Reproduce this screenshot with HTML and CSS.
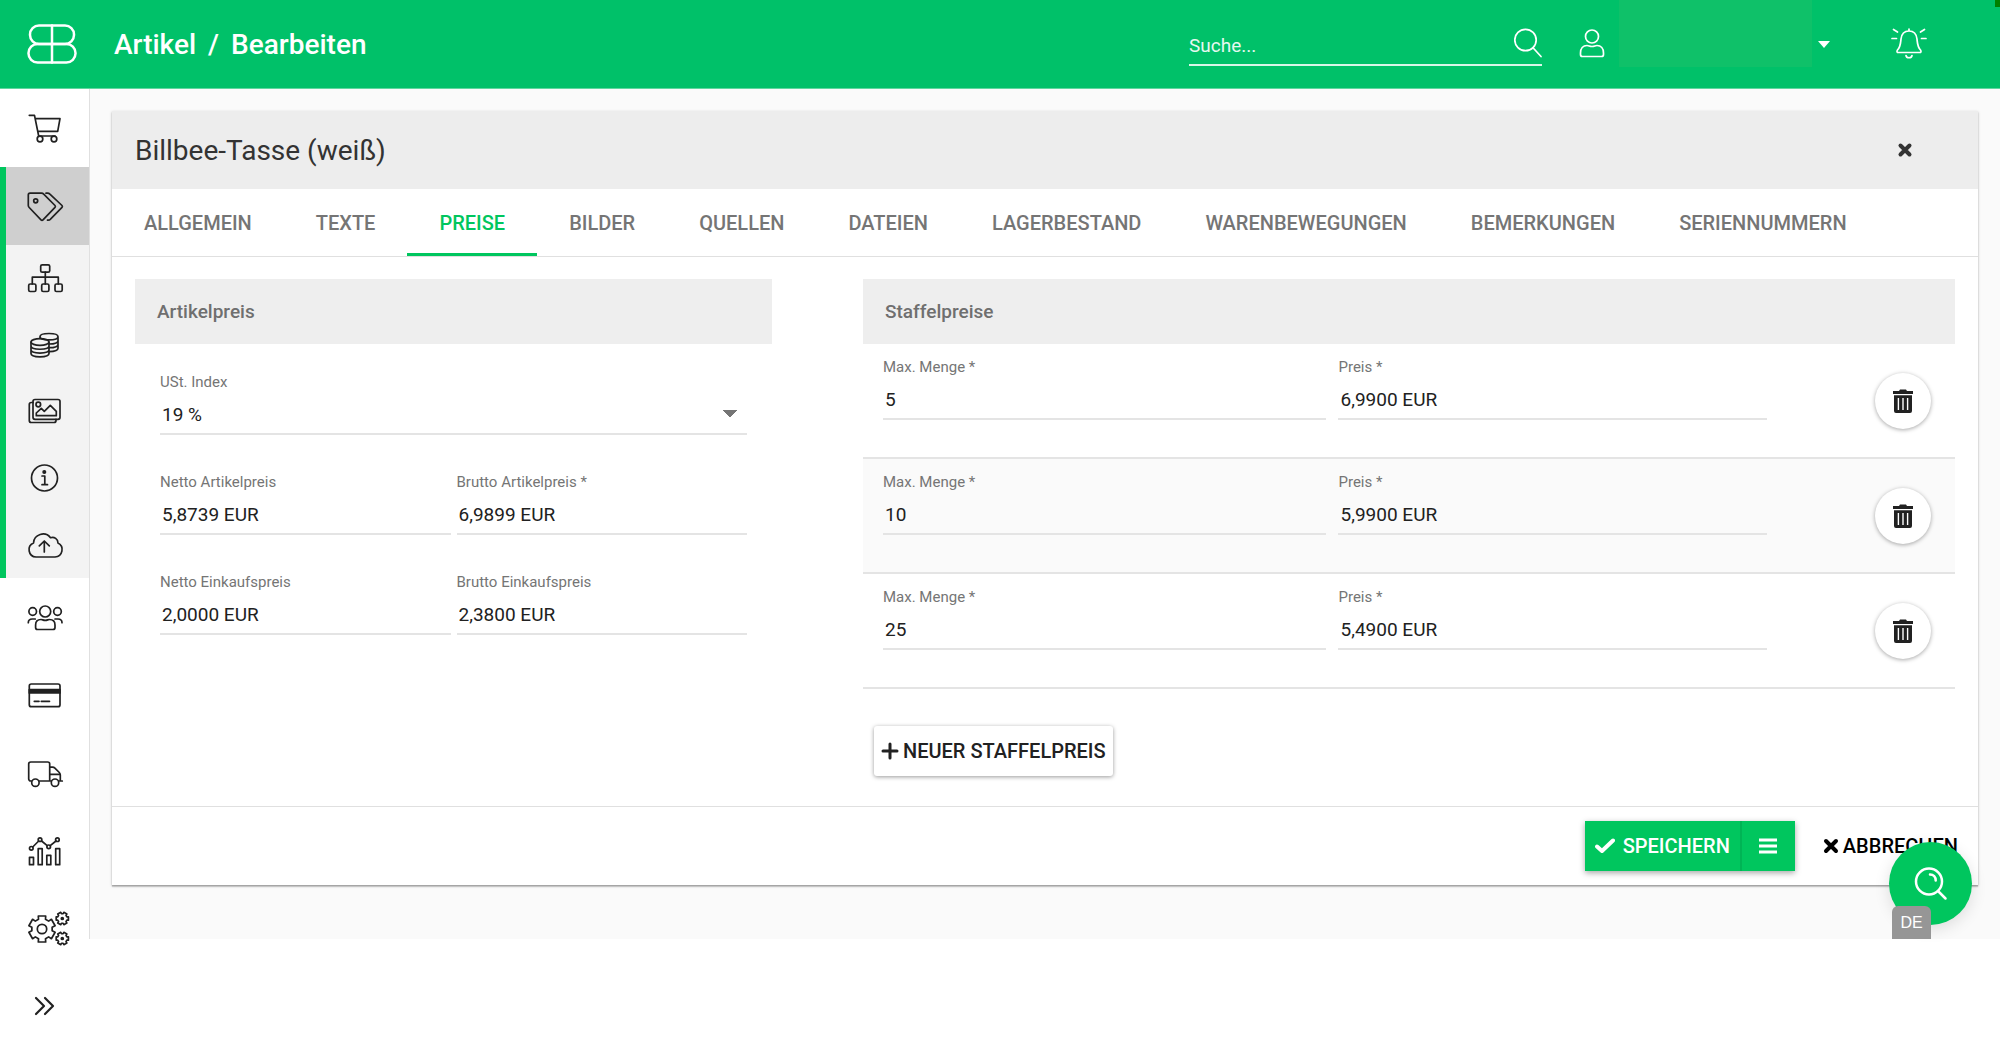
FILE: index.html
```
<!DOCTYPE html>
<html lang="de">

<head>
  <meta charset="UTF-8">
  <meta name="viewport" content="width=device-width, initial-scale=1.0">
  <title>Artikel / Bearbeiten</title>
  <link rel="stylesheet" href="styles.css">
</head>

<body>
  <!-- header -->
  <header class="header">
    <a href="#" class="header-logo" aria-label="Startseite">
      <svg width="50" height="42" viewBox="0 0 50 42">
        <rect x="3" y="2.5" width="44" height="18.5" rx="9" />
        <rect x="1.5" y="21" width="47" height="18.5" rx="9" />
        <path d="M25 2.5v37" />
      </svg>
    </a>
    <h1 class="header-ttl"><span>Artikel</span><span>/</span><span>Bearbeiten</span></h1>
    <form class="search">
      <input type="text" class="search-input" placeholder="Suche..." aria-label="Suche">
      <button type="button" class="icon-btn" aria-label="Suchen">
        <svg width="28" height="30" viewBox="0 0 28 30">
          <circle cx="11.5" cy="12" r="10.7" />
          <path d="M19 19.7l8 8.8" />
        </svg>
      </button>
    </form>
    <button type="button" class="user" aria-label="Benutzer">
      <svg width="26" height="30" viewBox="0 0 26 30">
        <circle cx="13" cy="7.500" r="6.5" />
        <path d="M8 16.500c2 0 2.500 1 5 1s3-1 5-1c4 0 6.500 3.200 6.500 7.500v1.500a2 2 0 0 1-2 2h-19a2 2 0 0 1-2-2V24c0-4.300 2.500-7.500 6.500-7.500z" />
      </svg>
      <span class="user-name"></span>
      <span class="user-caret"></span>
    </button>
    <button type="button" class="icon-btn bell" aria-label="Benachrichtigungen">
      <svg width="36" height="32" viewBox="0 0 36 32">
        <path d="M18 3v-2M18 3c-5 0-7.500 3.500-8 8-.5 5-.5 8-3.500 11-1 1.500-.5 2.500 1 2.500h21c1.500 0 2-1 1-2.500-3-3-3-6-3.500-11-.5-4.500-3-8-8-8zM15 27.500c.5 3 5.500 3 6 0M1 10.500h4.500M30.500 10.500H35M2.500 1.500l4 2.500M33.500 1.500l-4 2.500" />
      </svg>
    </button>
    <span class="header-mark"></span>
  </header>

  <div class="layout">
    <!-- sidebar -->
    <nav class="sidebar">
      <a href="#" class="sidebar-item" aria-label="Bestellungen">
        <svg width="44" height="36" viewBox="0 0 44 36">
          <path d="M2.300 5.300h5.200L11.700 26H28M8.200 8.700H33l-2.300 12.600H10.700" />
          <circle cx="13" cy="29" r="2.800" />
          <circle cx="27" cy="29" r="2.800" />
        </svg>
      </a>
      <div class="sidebar-group">
        <a href="#" class="sidebar-item is-active" aria-label="Artikel">
          <svg width="44" height="36" viewBox="0 0 44 36">
            <path d="M3 5.200h11.500c1 0 1.500.2 2.200.9L28 17.500c.5.600.5 1.300 0 1.900L16 31.800c-.7.700-1.300.7-2 0L2.200 19.500c-.6-.6-.9-1.100-.9-2V7c0-1.200.6-1.800 1.700-1.800z" />
            <circle cx="8.700" cy="12.800" r="2" />
            <path d="M19 5.200h1.500c1 0 1.700.3 2.400 1L35 17.500c.5.600.5 1.300 0 1.900L23.500 31.200c-.6.700-1.600 1-3 .9" />
          </svg>
        </a>
        <div class="sidebar-sub">
          <a href="#" class="sidebar-item" aria-label="Kategorien">
            <svg width="44" height="36" viewBox="0 0 44 36">
              <rect x="13.700" y="4.800" width="9" height="7.400" rx="1.500" />
              <rect x="1.700" y="24" width="7.200" height="7.500" rx="1.500" />
              <rect x="14.700" y="24" width="7.200" height="7.500" rx="1.500" />
              <rect x="28" y="24" width="7.200" height="7.500" rx="1.500" />
              <path d="M18.300 12.200V24M5.300 24v-6.800h26V24" />
            </svg>
          </a>
          <a href="#" class="sidebar-item" aria-label="Preise">
            <svg width="44" height="36" viewBox="0 0 44 36">
              <ellipse cx="13" cy="15" rx="9" ry="3.300" />
              <path d="M4 15v11.500c0 4.400 18 4.400 18 0V15M4 19c0 4.300 18 4.300 18 0M4 22.800c0 4.300 18 4.300 18 0" />
              <path d="M13 11.500V9.700c0-4.300 18-4.300 18 0v11.600c0 2-4 3.300-9 3.300M13 9.700c0 4.300 18 4.300 18 0M22 17c5 0 9-1.300 9-3.300M22 20.700c5 0 9-1.300 9-3.300" />
            </svg>
          </a>
          <a href="#" class="sidebar-item" aria-label="Bilder">
            <svg width="44" height="36" viewBox="0 0 44 36">
              <rect x="6" y="6.500" width="27" height="19.800" rx="2" />
              <path d="M6 9.500H4.300a2 2 0 0 0-2 2v16a2 2 0 0 0 2 2H27a2 2 0 0 0 2-2v-1.200" />
              <circle cx="11.300" cy="11.500" r="2.300" />
              <path d="M9.300 22.700V20l5-4.700 3 3 6-6 6 6v4.400z" />
            </svg>
          </a>
          <a href="#" class="sidebar-item" aria-label="Info">
            <svg width="44" height="36" viewBox="0 0 44 36">
              <circle cx="17.500" cy="18" r="13" />
              <circle cx="17.300" cy="12" r="1.200" class="fill" />
              <path d="M15 16h2.800v8.500M15 24.700h5.500" />
            </svg>
          </a>
          <a href="#" class="sidebar-item" aria-label="Upload">
            <svg width="44" height="36" viewBox="0 0 44 36">
              <path d="M9 30h19a7.400 7.400 0 0 0 3-14 5.500 5.500 0 0 0-7.500-5.300A9.500 9.500 0 0 0 6.500 16 7.300 7.300 0 0 0 9 30zM17.300 25V14M12.300 18.800l5-4.800 5 4.800" />
            </svg>
          </a>
        </div>
      </div>
      <a href="#" class="sidebar-item" aria-label="Kunden">
        <svg width="44" height="36" viewBox="0 0 44 36">
          <circle cx="18.200" cy="12.500" r="5.500" />
          <circle cx="5.700" cy="12.500" r="3.800" />
          <circle cx="30.500" cy="12.500" r="3.800" />
          <path d="M14 20.500c1.500 0 2 .8 4.200.8s2.700-.8 4.200-.8c3.600 0 5.600 2.200 5.600 5.500V28.500a2 2 0 0 1-2 2H10.600a2 2 0 0 1-2-2V26c0-3.300 2-5.500 5.400-5.500zM1.300 23.700c0-2.500 1.500-3.700 4-3.700h3M35 23.700c0-2.500-1.500-3.700-4-3.700h-3" />
        </svg>
      </a>
      <a href="#" class="sidebar-item" aria-label="Zahlungen">
        <svg width="44" height="36" viewBox="0 0 44 36">
          <rect x="2.300" y="7" width="30.700" height="22.700" rx="2" />
          <path class="fill" d="M2.300 12.500H33v3.500H2.300z" />
          <path d="M7.300 24.300H12M14.300 24.300h8.200" />
        </svg>
      </a>
      <a href="#" class="sidebar-item" aria-label="Versand">
        <svg width="44" height="36" viewBox="0 0 44 36">
          <path d="M4.500 26H3.700a2 2 0 0 1-2-2V9a2 2 0 0 1 2-2h17a2 2 0 0 1 2 2v17M12.300 26h12M31.800 26h3.500M22.700 12.200h2.800c1 0 1.700.3 2.400 1l4.400 4.300c.7.700 1 1.400 1 2.400V26M23 19.300h10" />
          <circle cx="8.400" cy="27.700" r="3.700" />
          <circle cx="28" cy="27.700" r="3.700" />
        </svg>
      </a>
      <a href="#" class="sidebar-item" aria-label="Auswertungen">
        <svg width="44" height="36" viewBox="0 0 44 36">
          <path d="M2.500 24.300h4v7.400h-4zM11.200 15.700h4v16h-4zM19.800 22.300h4v9.400h-4zM28.700 15.700h4v16h-4zM5.700 14l6-6M14.600 8l5.600 4.700M23.200 12.700L29 8" />
          <circle cx="4.300" cy="15.300" r="1.800" />
          <circle cx="13" cy="6.700" r="1.800" />
          <circle cx="21.700" cy="13.800" r="1.800" />
          <circle cx="30.400" cy="6.700" r="1.800" />
        </svg>
      </a>
      <a href="#" class="sidebar-item" aria-label="Einstellungen">
        <svg width="44" height="36" viewBox="0 0 44 36">
          <defs>
            <path id="gear" vector-effect="non-scaling-stroke" d="M-3.500-9.700L-3.700-13H3.700L3.500-9.700 6.650-7.880 9.410-9.700 13.110-3.300 10.150-1.820V1.820L13.110 3.300 9.410 9.700 6.650 7.880 3.500 9.700 3.700 13H-3.700L-3.500 9.700-6.650 7.880-9.410 9.700-13.110 3.300-10.150 1.820V-1.820L-13.110-3.300-9.410-9.700-6.650-7.880z" />
          </defs>
          <use href="#gear" transform="translate(15 18)" />
          <circle cx="15" cy="18" r="4.700" />
          <use href="#gear" transform="translate(35.300 7.500) rotate(30) scale(.47)" />
          <circle cx="35.300" cy="7.500" r="1" class="fill" />
          <use href="#gear" transform="translate(35.300 27.500) rotate(30) scale(.47)" />
          <circle cx="35.300" cy="27.500" r="1" class="fill" />
        </svg>
      </a>
      <a href="#" class="sidebar-item" aria-label="Menü ausklappen">
        <svg width="44" height="36" viewBox="0 0 44 36">
          <path class="bold" d="M9 10l8 8-8 8M18 10l8 8-8 8" />
        </svg>
      </a>
    </nav>
    <!-- sidebar -->

    <main class="main">
      <section class="card">
        <div class="card-header">
          <h2 class="card-ttl">Billbee-Tasse (weiß)</h2>
          <button type="button" class="icon-btn" aria-label="Schließen">
            <svg width="16" height="16" viewBox="0 0 16 16"><path d="M3.500 3.500l9 9M12.500 3.500l-9 9" /></svg>
          </button>
        </div>

        <div class="tabs" role="tablist">
          <button type="button" class="tab" role="tab">ALLGEMEIN</button>
          <button type="button" class="tab" role="tab">TEXTE</button>
          <button type="button" class="tab is-active" role="tab" aria-selected="true">PREISE</button>
          <button type="button" class="tab" role="tab">BILDER</button>
          <button type="button" class="tab" role="tab">QUELLEN</button>
          <button type="button" class="tab" role="tab">DATEIEN</button>
          <button type="button" class="tab" role="tab">LAGERBESTAND</button>
          <button type="button" class="tab" role="tab">WARENBEWEGUNGEN</button>
          <button type="button" class="tab" role="tab">BEMERKUNGEN</button>
          <button type="button" class="tab" role="tab">SERIENNUMMERN</button>
        </div>

        <div class="card-body">
          <!-- Artikelpreis -->
          <div class="panel">
            <h3 class="panel-ttl">Artikelpreis</h3>
            <div class="price-form">
              <div class="field field-wide">
                <label for="vat">USt. Index</label>
                <select id="vat">
                  <option>19 %</option>
                </select>
              </div>
              <div class="field">
                <label for="net-price">Netto Artikelpreis</label>
                <input type="text" id="net-price" value="5,8739 EUR">
              </div>
              <div class="field">
                <label for="gross-price">Brutto Artikelpreis *</label>
                <input type="text" id="gross-price" value="6,9899 EUR">
              </div>
              <div class="field">
                <label for="net-cost">Netto Einkaufspreis</label>
                <input type="text" id="net-cost" value="2,0000 EUR">
              </div>
              <div class="field">
                <label for="gross-cost">Brutto Einkaufspreis</label>
                <input type="text" id="gross-cost" value="2,3800 EUR">
              </div>
            </div>
          </div>

          <!-- Staffelpreise -->
          <div class="panel">
            <h3 class="panel-ttl">Staffelpreise</h3>
            <div class="tier">
              <div class="field">
                <label for="qty-1">Max. Menge *</label>
                <input type="text" id="qty-1" value="5">
              </div>
              <div class="field">
                <label for="price-1">Preis *</label>
                <input type="text" id="price-1" value="6,9900 EUR">
              </div>
              <button type="button" class="btn-delete" aria-label="Löschen">
                <svg width="22" height="24" viewBox="0 0 22 24"><path fill-rule="evenodd" d="M1 2h6l1-1.500h6L15 2h6v3H1zM2 6.300h18V22a2 2 0 0 1-2 2H4a2 2 0 0 1-2-2zM5.700 9v12h1.400V9zM10.300 9v12h1.400V9zM14.900 9v12h1.400V9z" /></svg>
              </button>
            </div>
            <div class="tier">
              <div class="field">
                <label for="qty-2">Max. Menge *</label>
                <input type="text" id="qty-2" value="10">
              </div>
              <div class="field">
                <label for="price-2">Preis *</label>
                <input type="text" id="price-2" value="5,9900 EUR">
              </div>
              <button type="button" class="btn-delete" aria-label="Löschen">
                <svg width="22" height="24" viewBox="0 0 22 24"><path fill-rule="evenodd" d="M1 2h6l1-1.500h6L15 2h6v3H1zM2 6.300h18V22a2 2 0 0 1-2 2H4a2 2 0 0 1-2-2zM5.700 9v12h1.400V9zM10.300 9v12h1.400V9zM14.900 9v12h1.400V9z" /></svg>
              </button>
            </div>
            <div class="tier">
              <div class="field">
                <label for="qty-3">Max. Menge *</label>
                <input type="text" id="qty-3" value="25">
              </div>
              <div class="field">
                <label for="price-3">Preis *</label>
                <input type="text" id="price-3" value="5,4900 EUR">
              </div>
              <button type="button" class="btn-delete" aria-label="Löschen">
                <svg width="22" height="24" viewBox="0 0 22 24"><path fill-rule="evenodd" d="M1 2h6l1-1.500h6L15 2h6v3H1zM2 6.300h18V22a2 2 0 0 1-2 2H4a2 2 0 0 1-2-2zM5.700 9v12h1.400V9zM10.300 9v12h1.400V9zM14.900 9v12h1.400V9z" /></svg>
              </button>
            </div>
            <button type="button" class="btn btn-add">
              <svg width="18" height="18" viewBox="0 0 18 18"><path d="M9 2v14M2 9h14" /></svg>
              NEUER STAFFELPREIS
            </button>
          </div>
        </div>

        <div class="card-footer">
          <div class="btn-group">
            <button type="button" class="btn btn-save">
              <svg width="20" height="16" viewBox="0 0 20 16"><path d="M2 8.500l5 4.500L18 2.500" /></svg>
              SPEICHERN
            </button>
            <button type="button" class="btn btn-menu" aria-label="Weitere Aktionen">
              <svg width="18" height="16" viewBox="0 0 18 16"><path d="M0 2h18M0 8h18M0 14h18" /></svg>
            </button>
          </div>
          <button type="button" class="btn btn-cancel">
            <svg width="16" height="16" viewBox="0 0 16 16"><path d="M3 3l10 10M13 3L3 13" /></svg>
            ABBRECHEN
          </button>
        </div>
      </section>

      <button type="button" class="fab" aria-label="Hilfe">
        <svg width="34" height="34" viewBox="0 0 34 34">
          <circle cx="15" cy="14.500" r="13" />
          <path d="M24 24l7.500 7.500M16 7.500c3.500 0 5.700 2.500 5.700 6" />
        </svg>
      </button>
      <a href="#" class="lang">DE</a>
    </main>
  </div>
</body>

</html>
```
FILE: styles.css
```
* {
  box-sizing: border-box;
}

body {
  margin: 0;
  font-family: Roboto, "Liberation Sans", sans-serif;
  font-size: 19px;
  color: #212121;
  background: #fff;
}

h1,
h2,
h3 {
  margin: 0;
}

button,
input,
select {
  font: inherit;
  color: inherit;
  margin: 0;
  padding: 0;
  border: none;
  border-radius: 0;
  background: none;
}

svg {
  display: block;
  flex: none;
  fill: none;
  stroke: currentColor;
  stroke-width: 1.7;
  stroke-linecap: round;
  stroke-linejoin: round;
}

.fill {
  fill: currentColor;
}

.bold {
  stroke-width: 2.2;
}

/* header */
.header {
  position: relative;
  display: flex;
  align-items: center;
  height: 89px;
  padding: 0 73px 0 27px;
  border-bottom: 1px solid #5fd79f;
  color: #fff;
  background: #00c169;
}

.header-logo {
  color: #fff;
}

.header-logo svg {
  stroke-width: 2.5;
}

.header-ttl {
  display: flex;
  gap: 12px;
  margin-left: 37px;
  font-size: 28px;
  font-weight: 500;
}

.search {
  display: flex;
  align-items: center;
  width: 353px;
  height: 44px;
  margin-left: auto;
  border-bottom: 2px solid #d9f6e8;
}

.search-input {
  flex: 1;
  min-width: 0;
  height: 36px;
  padding-top: 4px;
  outline: none;
}

.search-input::placeholder {
  color: #fff;
  opacity: .9;
}

.icon-btn {
  display: flex;
}

.user {
  display: flex;
  align-items: center;
  height: 88px;
  margin-left: 37px;
}

.user-name {
  align-self: flex-start;
  width: 193px;
  height: 67px;
  margin-left: 14px;
  background: #0fc169;
}

.user-caret {
  margin-left: 6px;
  border: 6px solid transparent;
  border-top: 7px solid #fff;
  border-bottom: none;
}

.bell {
  margin-left: 61px;
}

.header-mark {
  position: absolute;
  top: 0;
  right: 0;
  width: 5px;
  height: 7px;
  background: #008000;
}

/* sidebar */
.layout {
  display: flex;
  align-items: flex-start;
}

.sidebar {
  flex: none;
  width: 89px;
}

.sidebar-item {
  display: flex;
  align-items: center;
  height: 78px;
  padding-left: 27px;
  color: #212121;
}

.sidebar > .sidebar-item:last-child {
  height: 76px;
}

.sidebar-group {
  background: #f3f3f3;
  box-shadow: inset 6px 0 #00c65e;
}

.sidebar-group .is-active {
  background: linear-gradient(to right, transparent 6px, #cfcfcf 6px);
}

.sidebar-sub {
  display: flex;
  flex-direction: column;
  height: 333px;
}

.sidebar-sub .sidebar-item {
  flex: 1;
}

/* main */
.main {
  position: relative;
  flex: 1;
  min-width: 0;
  padding: 22px 22px 54px;
  border-left: 1px solid #e0e0e0;
  background: #fafafa;
}

.card {
  background: #fff;
  box-shadow: 0 1px 3px rgba(0, 0, 0, .2), 0 2px 1px rgba(0, 0, 0, .12), 0 1px 1px rgba(0, 0, 0, .14);
}

.card-header {
  display: flex;
  align-items: center;
  justify-content: space-between;
  height: 78px;
  padding: 0 65px 0 23px;
  color: #333;
  background: #ededed;
}

.card-header svg {
  stroke-width: 4;
}

.card-ttl {
  font-size: 28px;
  font-weight: 400;
}

.tabs {
  display: flex;
  height: 68px;
  border-bottom: 1px solid #e0e0e0;
}

.tab {
  padding: 3px 32px 0;
  border-bottom: 3px solid transparent;
  font-size: 20px;
  font-weight: 500;
  color: #757575;
}

.tab.is-active {
  color: #00c65e;
  border-color: #00c65e;
}

.card-body {
  display: grid;
  grid-template-columns: 35fr 60fr;
  column-gap: 91px;
  padding: 22px 23px 30px;
}

.panel-ttl {
  padding: 0 22px;
  line-height: 65px;
  font-size: 19px;
  font-weight: 500;
  color: #6f6f6f;
  background: #eee;
}

.price-form {
  display: grid;
  grid-template-columns: 1fr 1fr;
  gap: 37px 6px;
  padding: 28px 25px 0;
}

.field {
  display: flex;
  flex-direction: column;
  gap: 3px;
  min-width: 0;
}

.field-wide {
  grid-column: 1 / -1;
}

.field label {
  font-size: 15px;
  line-height: 20px;
  color: #757575;
}

.field input,
.field select {
  width: 100%;
  height: 40px;
  padding: 0 2px;
  border-bottom: 2px solid #e4e4e4;
  outline: none;
}

.field select {
  appearance: none;
  /* dropdown arrow */
  background:
    linear-gradient(to top right, transparent 50%, #757575 50%) right 17px center / 7px 8px no-repeat,
    linear-gradient(to top left, transparent 50%, #757575 50%) right 10px center / 7px 8px no-repeat;
}

.tier {
  display: grid;
  grid-template-columns: 444fr 429fr 176px;
  column-gap: 12px;
  height: 115px;
  padding: 13px 0 0 20px;
  border-bottom: 2px solid #e4e4e4;
}

.tier:nth-child(odd) {
  background: #fafafa;
}

.btn-delete {
  display: flex;
  align-items: center;
  justify-content: center;
  justify-self: end;
  width: 56px;
  height: 56px;
  margin: 16px 24px 0 0;
  border-radius: 50%;
  background: #fff;
  box-shadow: 0 1px 4px rgba(0, 0, 0, .35);
}

.btn-delete svg {
  fill: currentColor;
  stroke: none;
}

.btn {
  display: flex;
  align-items: center;
  justify-content: center;
  height: 50px;
  font-size: 20px;
  font-weight: 500;
}

.btn svg {
  stroke-width: 4;
}

.btn-add {
  gap: 4px;
  margin: 37px 0 0 11px;
  padding: 0 7px;
  border-radius: 3px;
  box-shadow: 0 1px 4px rgba(0, 0, 0, .4);
}

.btn-add svg,
.btn-menu svg {
  stroke-width: 3;
}

.card-footer {
  display: flex;
  align-items: center;
  justify-content: flex-end;
  gap: 28px;
  height: 79px;
  padding-right: 20px;
  border-top: 1px solid #e0e0e0;
}

.btn-group {
  display: flex;
  color: #fff;
  background: #00c65e;
  box-shadow: 0 2px 6px rgba(0, 0, 0, .35);
}

.btn-save {
  gap: 8px;
  padding: 0 10px;
}

.btn-menu {
  width: 55px;
  border-left: 2px solid #00b455;
}

.btn-menu svg {
  stroke-linecap: butt;
}

.btn-cancel {
  gap: 4px;
  color: #000;
}

/* floating help button and language badge */
.fab {
  position: absolute;
  right: 28px;
  bottom: 14px;
  display: flex;
  align-items: center;
  justify-content: center;
  width: 83px;
  height: 83px;
  border-radius: 50%;
  color: #fff;
  background: #00c65e;
  box-shadow: 0 4px 16px rgba(0, 0, 0, .12);
}

.fab svg {
  stroke-width: 2.5;
}

.lang {
  position: absolute;
  right: 69px;
  bottom: 0;
  width: 39px;
  height: 33px;
  border-radius: 6px 6px 0 0;
  font: 16px/34px "Liberation Sans", sans-serif;
  text-align: center;
  text-decoration: none;
  color: #fff;
  background: #969696;
}
```
